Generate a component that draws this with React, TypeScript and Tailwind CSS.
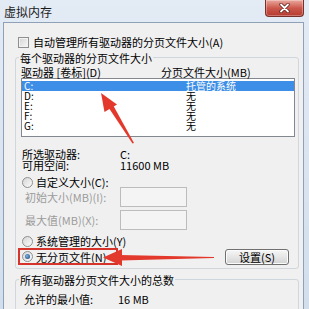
function CheckBox() {
  return (
    <span className="inline-block h-[11px] w-[11px] shrink-0 border border-[#8e8f8f] bg-linear-to-br from-[#d4d4d4] to-[#f8f8f8] shadow-[inset_0_0_0_1px_#f2f2f2]" />
  );
}

function Radio({ checked }: { checked?: boolean }) {
  return (
    <span className="inline-flex h-[11px] w-[11px] shrink-0 items-center justify-center rounded-full border border-[#8e8f8f] bg-linear-to-br from-[#d6d6d6] to-[#fbfbfb]">
      {checked && (
        <span className="h-[5px] w-[5px] rounded-full bg-[radial-gradient(circle_at_40%_40%,#7fb2e6,#123f73)]" />
      )}
    </span>
  );
}

export default function App() {
  const rows = [
    { d: "C:", s: "托管的系统", sel: true },
    { d: "D:", s: "无" },
    { d: "E:", s: "无" },
    { d: "F:", s: "无" },
    { d: "G:", s: "无" },
  ];
  return (
    <div className="relative h-[309px] w-[309px] overflow-hidden bg-linear-to-b from-[#e3ebf5] to-[#d2deec] font-['Noto_Sans_CJK_SC','Noto_Sans',sans-serif] text-[11px] leading-[12px] text-black">
      {/* title bar */}
      <div className="flex h-[22px] items-start justify-between">
        <span className="pl-[4px] pt-[5px] text-[12px] leading-[13px] text-[#1b1b1b]">虚拟内存</span>
        <div className="mr-[5px] flex h-[17px] w-[39px] items-center justify-center rounded-b-[4px] border border-t-0 border-[#7a302a] bg-linear-to-b from-[#e9a89e] via-[#cc584d] to-[#b53a2f] shadow-[inset_0_0_0_1px_rgba(255,255,255,0.3)]">
          <svg width="11" height="10" viewBox="0 0 11 10">
            <path d="M2 1.5 L9 8.5 M9 1.5 L2 8.5" stroke="#5a1d18" strokeWidth="3.2" strokeLinecap="round" />
            <path d="M2 1.5 L9 8.5 M9 1.5 L2 8.5" stroke="#ffffff" strokeWidth="1.8" strokeLinecap="round" />
          </svg>
        </div>
      </div>

      {/* client area */}
      <div className="ml-[3px] mr-[5px] h-[287px] border-l border-r border-t border-[#8ea1b7] bg-[#f0f0f0]">
        <div className="mt-[13px] flex h-[12px] items-center pl-[14px]">
          <CheckBox />
          <span className="ml-[4px]">自动管理所有驱动器的分页文件大小(A)</span>
        </div>

        {/* group 1 */}
        <div className="ml-[11px] mt-[9px] w-[284px] rounded-[3px] border border-[#cfd6dc] pb-[3px]">
          <div className="-mt-[6px] ml-[3px] h-[13px] w-fit bg-[#f0f0f0] px-[1px] leading-[13px]">每个驱动器的分页文件大小</div>
          <div className="flex h-[13px] items-center leading-[12px]">
            <span className="ml-[5px] w-[140px]">驱动器 [卷标](D)</span>
            <span>分页文件大小(MB)</span>
          </div>
          <div className="ml-[5px] h-[59px] w-[274px] border border-[#828790] bg-white pt-[2px]">
            {rows.map((r) => (
              <div
                key={r.d}
                className={
                  r.sel
                    ? "flex h-[10px] items-center bg-[#3d8ee6] text-[10px] leading-[10px] text-white"
                    : "flex h-[10px] items-center text-[10px] leading-[10px]"
                }
              >
                <span className="w-[164px] pl-[2px]">{r.d}</span>
                <span>{r.s}</span>
              </div>
            ))}
          </div>

          <div className="mt-[11px] flex h-[11px] items-center">
            <span className="ml-[6px] w-[98px]">所选驱动器:</span>
            <span>C:</span>
          </div>
          <div className="flex h-[11px] items-center">
            <span className="ml-[6px] w-[98px]">可用空间:</span>
            <span>11600 MB</span>
          </div>

          <div className="mt-[7px] flex h-[10px] items-center pl-[6px]">
            <Radio />
            <span className="ml-[3px]">自定义大小(C):</span>
          </div>
          <div className="flex h-[20px] items-center">
            <span className="ml-[9px] w-[95px] text-[#9c9c9c]">初始大小(MB)(I):</span>
            <span className="h-[20px] w-[67px] border border-[#bcbcbc] bg-[#f4f4f4]" />
          </div>
          <div className="mt-[3px] flex h-[20px] items-center">
            <span className="ml-[9px] w-[95px] text-[#9c9c9c]">最大值(MB)(X):</span>
            <span className="h-[20px] w-[67px] border border-[#bcbcbc] bg-[#f4f4f4]" />
          </div>

          <div className="mt-[5px] flex h-[12px] items-center pl-[6px]">
            <Radio />
            <span className="ml-[3px]">系统管理的大小(Y)</span>
          </div>

          <div className="relative mt-[1px] flex h-[17px] items-center pl-[6px]">
            <Radio checked />
            <span className="ml-[3px]">无分页文件(N)</span>
            <div className="absolute left-[2px] top-0 h-[17px] w-[100px] border-2 border-[#d6332b]" />
            <button className="ml-auto mr-[9px] flex h-[16px] w-[64px] items-center justify-center rounded-[3px] border border-[#707070] bg-linear-to-b from-[#f6f6f6] via-[#e6e6e6] to-[#d2d2d2] text-[11px] leading-[12px] shadow-[inset_0_0_0_1px_#fbfbfb]">
              设置(S)
            </button>
          </div>
        </div>

        {/* group 2 */}
        <div className="ml-[11px] mt-[10px] h-[60px] w-[284px] rounded-[3px] border border-[#cfd6dc]">
          <div className="-mt-[7px] ml-[3px] h-[14px] w-fit bg-[#f0f0f0] px-[1px] leading-[14px]">所有驱动器分页文件大小的总数</div>
          <div className="mt-[6px] flex h-[12px] items-center">
            <span className="ml-[8px] w-[94px]">允许的最小值:</span>
            <span>16 MB</span>
          </div>
        </div>
      </div>

      {/* annotation arrows */}
      <svg className="pointer-events-none absolute left-0 top-0" width="309" height="309" viewBox="0 0 309 309">
        <polygon points="101,93 104.5,112 117,104.5" fill="#e3392c" />
        <polygon points="108.5,107.5 113,105 134,143 132.5,143.5" fill="#e3392c" />
        <polygon points="103,257.5 122,249 122,266" fill="#e3392c" />
        <polygon points="120,255 214,257 214,258 120,260.5" fill="#e3392c" />
      </svg>
    </div>
  );
}
